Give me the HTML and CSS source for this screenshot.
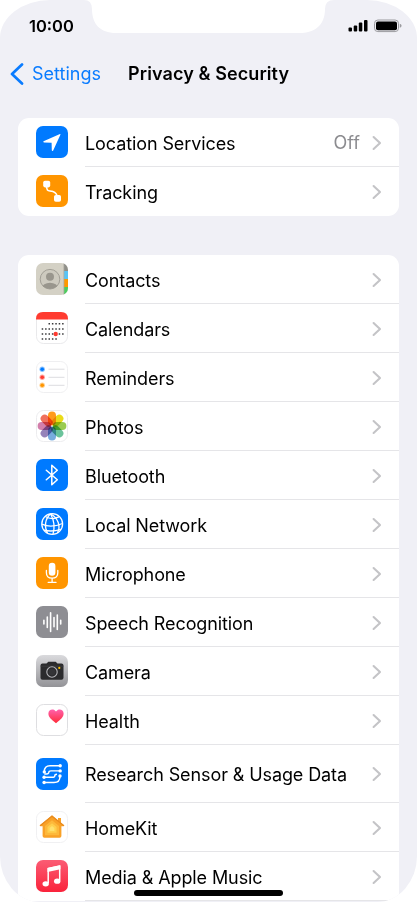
FILE: index.html
```html
<!DOCTYPE html>
<html lang="en">

<head>
    <meta charset="UTF-8">
    <meta name="viewport" content="width=device-width, initial-scale=1.0">
    <title>Privacy &amp; Security</title>
    <link rel="stylesheet" href="styles.css">
</head>

<body>
    <svg class="defs" width="0" height="0">
        <symbol id="chevron" viewBox="0 0 10 16">
            <path d="M1.6 2 L8 8 L1.6 14" fill="none" stroke="#c4c4c7" stroke-width="2.1" stroke-linecap="round" stroke-linejoin="round"/>
        </symbol>
    </svg>

    <div class="phone">
        <svg class="notch" viewBox="0 0 250 34">
            <path d="M0 0 H250 Q241 0 241 9 C241 25 231 33 215 33 H32 C16 33 8 24 8 9 Q8 0 0 0 Z" fill="#fff"/>
        </svg>

        <header class="status">
            <span class="time">10:00</span>
            <svg class="signals" width="54" height="14" viewBox="0 0 54 14">
                <rect x="0.5" y="8.5" width="3.5" height="4" rx="1"/>
                <rect x="5.7" y="6.5" width="3.5" height="6" rx="1"/>
                <rect x="10.8" y="3.5" width="3.5" height="9" rx="1"/>
                <rect x="16" y="1" width="3.5" height="11.5" rx="1"/>
                <rect x="26.5" y="1" width="24" height="11.6" rx="3.4" fill="none" stroke="#9b9b9f"/>
                <rect x="28" y="2.4" width="21" height="8.8" rx="2"/>
                <path d="M51.8 4.8 Q53.6 5.3 53.6 6.8 Q53.6 8.3 51.8 8.8 Z" fill="#9b9b9f"/>
            </svg>
        </header>

        <nav class="navbar">
            <a class="back">
                <svg width="14" height="22" viewBox="0 0 14 22">
                    <path d="M12 1.5 L2 11 L12 20.5" fill="none" stroke="#0a7cff" stroke-width="2.7" stroke-linecap="round" stroke-linejoin="round"/>
                </svg>
                <span>Settings</span>
            </a>
            <h1>Privacy &amp; Security</h1>
        </nav>

        <main>
            <ul class="card">
                <li class="row">
                    <svg class="icon" viewBox="0 0 32 32">
                        <rect width="32" height="32" rx="7" fill="#007aff"/>
                        <path d="M24 8 L7.5 15.3 Q6.8 16.3 8 16.6 L15.6 16.7 L15.8 24.2 Q16.3 25.6 17.2 24.4 L24.5 8.6 Q24.6 8 24 8 Z" fill="#fff"/>
                    </svg>
                    <div class="line"><span class="label">Location Services</span><span class="value">Off</span><svg class="chevron"><use href="#chevron"/></svg></div>
                </li>
                <li class="row">
                    <svg class="icon" viewBox="0 0 32 32">
                        <rect width="32" height="32" rx="7" fill="#ff9500"/>
                        <path d="M10.5 10 C10.5 18 13 15 17 16.5 Q21.5 18 21.5 24" fill="none" stroke="#fff" stroke-width="1.6"/>
                        <rect x="7.2" y="5.8" width="7" height="6.6" rx="1.8" fill="#fff"/>
                        <rect x="18" y="20" width="7" height="6.8" rx="1.8" fill="#fff"/>
                    </svg>
                    <div class="line"><span class="label">Tracking</span><svg class="chevron"><use href="#chevron"/></svg></div>
                </li>
            </ul>

            <ul class="card long">
                <li class="row">
                    <svg class="icon" viewBox="0 0 32 32">
                        <clipPath id="tile"><rect width="32" height="32" rx="7"/></clipPath>
                        <g clip-path="url(#tile)">
                            <rect width="32" height="32" fill="#d4d1c5"/>
                            <rect x="28" width="4" height="8" fill="#8f8f89"/>
                            <rect x="28" y="8" width="4" height="8" fill="#5ac4f5"/>
                            <rect x="28" y="16" width="4" height="8" fill="#ff9800"/>
                            <rect x="28" y="24" width="4" height="8" fill="#4ccd5e"/>
                            <rect x="27.5" width="0.8" height="32" fill="#aaa89f"/>
                        </g>
                        <clipPath id="face"><circle cx="14" cy="16.2" r="9.8"/></clipPath>
                        <circle cx="14" cy="16.2" r="9.8" fill="#cdcabf" stroke="#a29f96" stroke-width="1"/>
                        <g clip-path="url(#face)" fill="#99968d">
                            <circle cx="14" cy="13.7" r="4"/>
                            <ellipse cx="14" cy="25" rx="8" ry="5.3"/>
                        </g>
                    </svg>
                    <div class="line"><span class="label">Contacts</span><svg class="chevron"><use href="#chevron"/></svg></div>
                </li>
                <li class="row">
                    <svg class="icon" viewBox="0 0 32 32">
                        <rect x=".5" y=".5" width="31" height="31" rx="7" fill="#fff" stroke="#e9e9eb"/>
                        <path d="M0 7.5 V7 Q0 0 7 0 H25 Q32 0 32 7 V7.5 Z" fill="#ff3b30"/>
                        <g fill="none" stroke="#39393b" stroke-width="1.5" stroke-dasharray="1.5 1.9">
                            <path d="M12.5 11.8 H28"/>
                            <path d="M5.7 17 H28"/>
                            <path d="M5.7 22 H28"/>
                            <path d="M5.7 27 H21"/>
                        </g>
                        <circle cx="19.7" cy="22" r="2.2" fill="#ff3b30"/>
                    </svg>
                    <div class="line"><span class="label">Calendars</span><svg class="chevron"><use href="#chevron"/></svg></div>
                </li>
                <li class="row">
                    <svg class="icon" viewBox="0 0 32 32">
                        <rect x=".5" y=".5" width="31" height="31" rx="7" fill="#fff" stroke="#efeff1"/>
                        <path d="M12.5 8.2 H28.5 M12.5 16.3 H28.5 M12.5 24.3 H28.5" stroke="#dddde0"/>
                        <g fill="#007aff"><circle cx="6.2" cy="8.2" r="2.7" opacity=".45"/><circle cx="6.2" cy="8.2" r="1.8"/></g>
                        <g fill="#ff3b30"><circle cx="6.2" cy="16.2" r="2.7" opacity=".45"/><circle cx="6.2" cy="16.2" r="1.8"/></g>
                        <g fill="#ff9500"><circle cx="6.2" cy="24.3" r="2.7" opacity=".45"/><circle cx="6.2" cy="24.3" r="1.8"/></g>
                    </svg>
                    <div class="line"><span class="label">Reminders</span><svg class="chevron"><use href="#chevron"/></svg></div>
                </li>
                <li class="row">
                    <svg class="icon petals" viewBox="0 0 32 32">
                        <rect x=".5" y=".5" width="31" height="31" rx="7" fill="#fff" stroke="#ececee"/>
                        <rect x="12" y="1.6" width="8" height="13.6" rx="4" fill="#ff9b1c"/>
                        <rect x="12" y="1.6" width="8" height="13.6" rx="4" fill="#eadb19" transform="rotate(45 16 16)"/>
                        <rect x="12" y="1.6" width="8" height="13.6" rx="4" fill="#9acb50" transform="rotate(90 16 16)"/>
                        <rect x="12" y="1.6" width="8" height="13.6" rx="4" fill="#6bc39b" transform="rotate(135 16 16)"/>
                        <rect x="12" y="1.6" width="8" height="13.6" rx="4" fill="#78acdf" transform="rotate(180 16 16)"/>
                        <rect x="12" y="1.6" width="8" height="13.6" rx="4" fill="#9583ba" transform="rotate(225 16 16)"/>
                        <rect x="12" y="1.6" width="8" height="13.6" rx="4" fill="#d27fab" transform="rotate(270 16 16)"/>
                        <rect x="12" y="1.6" width="8" height="13.6" rx="4" fill="#f0705c" transform="rotate(315 16 16)"/>
                    </svg>
                    <div class="line"><span class="label">Photos</span><svg class="chevron"><use href="#chevron"/></svg></div>
                </li>
                <li class="row">
                    <svg class="icon" viewBox="0 0 32 32">
                        <rect width="32" height="32" rx="7" fill="#007aff"/>
                        <path d="M10.3 11.2 L21.3 20.7 L15.8 25.8 V6.2 L21.3 11.3 L10.3 20.8" fill="none" stroke="#fff" stroke-width="1.5" stroke-linejoin="round" stroke-linecap="round"/>
                    </svg>
                    <div class="line"><span class="label">Bluetooth</span><svg class="chevron"><use href="#chevron"/></svg></div>
                </li>
                <li class="row">
                    <svg class="icon" viewBox="0 0 32 32">
                        <rect width="32" height="32" rx="7" fill="#007aff"/>
                        <g fill="none" stroke="#fff" stroke-width="1.3">
                            <circle cx="16.2" cy="16" r="10.4"/>
                            <path d="M14.5 5.8 C9 11 8 19 11.5 25 M14.5 5.8 C18 12 19 19 17 26.2 M14.5 5.8 C22 10 25 18 21.5 24.8"/>
                            <path d="M9.2 8.5 Q16 12.5 23.5 8.7 M5.9 16.2 Q15 20.5 26.6 15.5 M8 22.2 Q16 24.2 25 21.3"/>
                        </g>
                    </svg>
                    <div class="line"><span class="label">Local Network</span><svg class="chevron"><use href="#chevron"/></svg></div>
                </li>
                <li class="row">
                    <svg class="icon" viewBox="0 0 32 32">
                        <rect width="32" height="32" rx="7" fill="#ff9500"/>
                        <rect x="12.8" y="5.8" width="6.6" height="13" rx="3.3" fill="#fff"/>
                        <path d="M10.4 13.5 V15.7 Q10.4 21.2 16.1 21.2 Q21.8 21.2 21.8 15.7 V13.5 M16.1 21.2 V25.3 M12.2 25.4 H20" fill="none" stroke="#fff" stroke-width="1.3" stroke-linecap="round"/>
                    </svg>
                    <div class="line"><span class="label">Microphone</span><svg class="chevron"><use href="#chevron"/></svg></div>
                </li>
                <li class="row">
                    <svg class="icon" viewBox="0 0 32 32">
                        <rect width="32" height="32" rx="7" fill="#8e8e93"/>
                        <path d="M7.9 14.3 V18 M11.3 11 V21.4 M14.6 6.8 V25.5 M18 11.5 V20.8 M21.3 9 V23.4 M24.7 14.3 V18" stroke="#fff" stroke-width="1.6" stroke-linecap="round"/>
                    </svg>
                    <div class="line"><span class="label">Speech Recognition</span><svg class="chevron"><use href="#chevron"/></svg></div>
                </li>
                <li class="row">
                    <svg class="icon" viewBox="0 0 32 32">
                        <linearGradient id="silver" x2="0" y2="1"><stop stop-color="#dadadd"/><stop offset="1" stop-color="#939397"/></linearGradient>
                        <rect width="32" height="32" rx="7" fill="url(#silver)"/>
                        <path d="M6.5 8.5 H10.5 L12.3 6.7 H19.7 L21.5 8.5 H25.5 Q27.5 8.5 27.5 10.5 V22.8 Q27.5 24.8 25.5 24.8 H6.5 Q4.5 24.8 4.5 22.8 V10.5 Q4.5 8.5 6.5 8.5 Z" fill="#2b2b2d"/>
                        <path d="M4.5 11.2 H27.5" stroke="#444447" stroke-width=".6"/>
                        <circle cx="16" cy="17" r="5.2" fill="#29292b" stroke="#b7b7bb" stroke-width="1.1"/>
                        <circle cx="16" cy="17" r="3.4" fill="#343437"/>
                        <circle cx="23.3" cy="12.9" r="1.1" fill="#ffc400"/>
                    </svg>
                    <div class="line"><span class="label">Camera</span><svg class="chevron"><use href="#chevron"/></svg></div>
                </li>
                <li class="row">
                    <svg class="icon" viewBox="0 0 32 32">
                        <linearGradient id="pink" x2="0" y2="1"><stop stop-color="#ff61ad"/><stop offset="1" stop-color="#ff2b37"/></linearGradient>
                        <rect x=".5" y=".5" width="31" height="31" rx="7" fill="#fff" stroke="#dedee1"/>
                        <path d="M20 19.3 C15 15.5 12.4 13 12.4 9.6 C12.4 5.3 17.7 4.1 20 7.6 C22.3 4.1 27.6 5.3 27.6 9.6 C27.6 13 25 15.5 20 19.3 Z" fill="url(#pink)"/>
                    </svg>
                    <div class="line"><span class="label">Health</span><svg class="chevron"><use href="#chevron"/></svg></div>
                </li>
                <li class="row tall">
                    <svg class="icon" viewBox="0 0 32 32">
                        <rect width="32" height="32" rx="7" fill="#007aff"/>
                        <g fill="none" stroke="#fff" stroke-width="1.4">
                            <path d="M24 7.7 H14 Q8.3 7.7 8.3 13.6"/>
                            <path d="M24 12.9 H15 Q12.8 12.9 12.8 14.3 Q12.8 16 10.5 16 H8.3 M8.3 19.3 H16 Q18.8 19.3 18.8 17.7 Q18.8 16.2 21 16.2"/>
                            <path d="M8.3 24.5 H18 Q24 24.5 24 18.2"/>
                        </g>
                        <g fill="#fff">
                            <circle cx="24.2" cy="7.7" r="1.7"/><circle cx="24.2" cy="12.9" r="1.7"/><circle cx="24" cy="18" r="1.7"/>
                            <circle cx="8.3" cy="13.9" r="1.7"/><circle cx="8.1" cy="19.3" r="1.7"/><circle cx="8.1" cy="24.5" r="1.7"/>
                        </g>
                    </svg>
                    <div class="line"><span class="label">Research Sensor &amp; Usage Data</span><svg class="chevron"><use href="#chevron"/></svg></div>
                </li>
                <li class="row">
                    <svg class="icon" viewBox="0 0 32 32">
                        <rect x=".5" y=".5" width="31" height="31" rx="7" fill="#fff" stroke="#f0f0f2"/>
                        <path d="M22 7 H25 V12 L28 14.3 L26.8 15.2 H25.4 V25 Q25.4 26.8 23.6 26.8 H8.4 Q6.6 26.8 6.6 25 V15.2 H5.2 L4 14.3 L16 4.6 L22 9.4 Z" fill="#f9a127"/>
                        <path d="M4.4 14.5 L16 5.2 L27.6 14.5" fill="none" stroke="#e98b1d" stroke-width="1.3" stroke-linecap="round"/>
                        <path d="M16 9.2 L23 15 V24.3 H9 V15 Z" fill="#fdb83b"/>
                        <path d="M16 12.3 L20.5 16 V21.8 H11.5 V16 Z" fill="#ffcf4e"/>
                        <path d="M16 15 L18.4 17 V20 H13.6 V17 Z" fill="#ffe16f"/>
                    </svg>
                    <div class="line"><span class="label">HomeKit</span><svg class="chevron"><use href="#chevron"/></svg></div>
                </li>
                <li class="row">
                    <svg class="icon" viewBox="0 0 32 32">
                        <linearGradient id="music" x2="0" y2="1"><stop stop-color="#fb5c74"/><stop offset="1" stop-color="#fa233b"/></linearGradient>
                        <rect width="32" height="32" rx="7" fill="url(#music)"/>
                        <path d="M12.2 23 V8.6 L23.7 6 V20.5" fill="none" stroke="#fff" stroke-width="1.5" stroke-linejoin="round"/>
                        <path d="M11.5 8 L24.4 5.2 V9.2 L11.5 12 Z" fill="#fff"/>
                        <ellipse cx="9.7" cy="23.8" rx="3.2" ry="2.6" fill="#fff"/>
                        <ellipse cx="21.2" cy="21.2" rx="3.2" ry="2.6" fill="#fff"/>
                    </svg>
                    <div class="line"><span class="label">Media &amp; Apple Music</span><svg class="chevron"><use href="#chevron"/></svg></div>
                </li>
            </ul>
        </main>

        <div class="home-bar"></div>
    </div>
</body>

</html>
```
FILE: styles.css
```css
body {
    margin: 0;
    background: #fff;
    font-family: Inter, "Liberation Sans", sans-serif;
    color: #000;
}

.defs {
    position: absolute;
}

.phone {
    position: relative;
    box-sizing: border-box;
    width: 417px;
    height: 902px;
    overflow: hidden;
    background: #f0f0f6;
    border-radius: 50px 50px 40px 40px / 38px 38px 46px 46px;
}

.notch {
    position: absolute;
    top: 0;
    left: 84px;
    width: 250px;
    height: 34px;
}

.status {
    display: flex;
    justify-content: space-between;
    align-items: center;
    height: 52px;
    padding: 0 15px 0 29px;
}

.time {
    font-size: 16.5px;
    font-weight: 600;
    line-height: 20px;
}

.navbar {
    display: flex;
    align-items: center;
    height: 43px;
    padding-left: 10px;
}

.back {
    display: flex;
    align-items: center;
    gap: 8px;
    width: 118px;
    font-size: 18px;
    color: #0a7cff;
}

h1 {
    margin: 0;
    font-size: 18px;
    font-weight: 600;
    letter-spacing: 0.1px;
    white-space: nowrap;
}

main {
    padding: 23px 18px 0;
}

.card {
    margin: 0 0 39px;
    padding: 0;
    list-style: none;
    background: #fff;
    border-radius: 11px;
    overflow: hidden;
}

.card.long {
    margin-bottom: 0;
    border-radius: 11px 11px 0 0;
}

.row {
    display: flex;
    align-items: center;
    height: 49px;
    padding-left: 18px;
}

.row.tall {
    height: 58px;
}

.icon {
    flex: none;
    width: 32px;
    height: 32px;
    margin: 0 17px 1px 0;
}

.tall .icon {
    margin-bottom: 0;
}

.petals rect + rect {
    mix-blend-mode: multiply;
}

.line {
    display: flex;
    align-items: center;
    flex: 1;
    box-sizing: border-box;
    height: 100%;
    padding: 1px 17px 0 0;
    border-bottom: 1px solid #e5e5e8;
    font-size: 18px;
    white-space: nowrap;
}

.card:not(.long) .row:last-child .line {
    border-bottom-color: transparent;
}

.label {
    flex: 1;
    padding-top: 1px;
    letter-spacing: -0.1px;
}

.value {
    margin-right: 12px;
    color: #8c8c90;
}

.chevron {
    width: 10px;
    height: 16px;
}

.home-bar {
    position: absolute;
    left: 134px;
    bottom: 6px;
    width: 149px;
    height: 6px;
    border-radius: 3px;
    background: #000;
}
```
